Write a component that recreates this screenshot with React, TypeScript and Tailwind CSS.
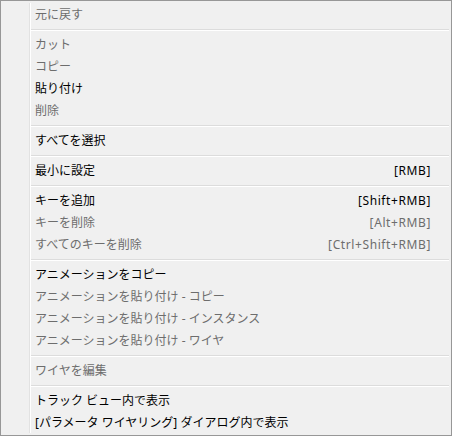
import React from 'react';

type Item =
  | { type: 'sep' }
  | { type: 'item'; label: string; shortcut?: string; disabled?: boolean };

const items: Item[] = [
  { type: 'item', label: '元に戻す', disabled: true },
  { type: 'sep' },
  { type: 'item', label: 'カット', disabled: true },
  { type: 'item', label: 'コピー', disabled: true },
  { type: 'item', label: '貼り付け' },
  { type: 'item', label: '削除', disabled: true },
  { type: 'sep' },
  { type: 'item', label: 'すべてを選択' },
  { type: 'sep' },
  { type: 'item', label: '最小に設定', shortcut: '[RMB]' },
  { type: 'sep' },
  { type: 'item', label: 'キーを追加', shortcut: '[Shift+RMB]' },
  { type: 'item', label: 'キーを削除', shortcut: '[Alt+RMB]', disabled: true },
  { type: 'item', label: 'すべてのキーを削除', shortcut: '[Ctrl+Shift+RMB]', disabled: true },
  { type: 'sep' },
  { type: 'item', label: 'アニメーションをコピー' },
  { type: 'item', label: 'アニメーションを貼り付け - コピー', disabled: true },
  { type: 'item', label: 'アニメーションを貼り付け - インスタンス', disabled: true },
  { type: 'item', label: 'アニメーションを貼り付け - ワイヤ', disabled: true },
  { type: 'sep' },
  { type: 'item', label: 'ワイヤを編集', disabled: true },
  { type: 'sep' },
  { type: 'item', label: 'トラック ビュー内で表示' },
  { type: 'item', label: '[パラメータ ワイヤリング] ダイアログ内で表示' },
];

const App = () => {
  return (
    <div
      className="w-[452px] h-[436px] border border-[#979797] bg-[#f0f0f0] py-[2px] flex text-[12px] leading-[22px]"
      style={{ fontFamily: '"Noto Sans", "Noto Sans CJK JP", sans-serif' }}
    >
      {/* icon gutter */}
      <div className="w-[28px] shrink-0" />
      <div className="flex-1 flex flex-col border-l border-[#e2e2e2]">
        <div className="flex-1 flex flex-col border-l border-white">
          {items.map((it, i) =>
            it.type === 'sep' ? (
              <div key={i} className="h-[8px] pt-[4px] pr-[2px]">
                <div className="h-px bg-[#dcdcdc]" />
                <div className="h-px bg-white" />
              </div>
            ) : (
              <div
                key={i}
                className={`h-[22px] flex items-center justify-between pl-[4px] pr-[20px] pt-[1px] whitespace-nowrap ${
                  it.disabled ? 'text-[#6d6d6d]' : 'text-black'
                }`}
              >
                <span>{it.label}</span>
                {it.shortcut && <span className="tracking-[0.6px]">{it.shortcut}</span>}
              </div>
            )
          )}
        </div>
      </div>
    </div>
  );
};

export default App;
